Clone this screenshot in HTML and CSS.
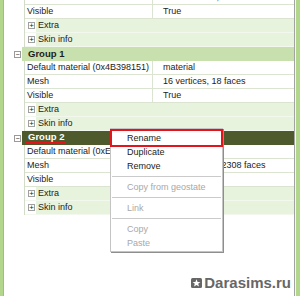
FILE: index.html
```html
<html lang="en">
<head>
	<meta charset="UTF-8">
	<title>Groups</title>
	<link rel="stylesheet" href="styles.css">
</head>
<body>
	<div class="frame">
		<div class="panel">
			<div class="tree">
				<div class="props">
					<div class="prop"><span class="name">Mesh</span><span class="value">1816 vertices, 2308 faces</span></div>
					<div class="prop"><span class="name">Visible</span><span class="value">True</span></div>
					<div class="sub"><span class="plus">+</span><span class="sub-label">Extra</span></div>
					<div class="sub"><span class="plus">+</span><span class="sub-label">Skin info</span></div>
				</div>

				<div class="group">
					<span class="toggle">−</span>
					<span class="group-label">Group 1</span>
				</div>
				<div class="props">
					<div class="prop"><span class="name">Default material (0x4B398151)</span><span class="value">material</span></div>
					<div class="prop"><span class="name">Mesh</span><span class="value">16 vertices, 18 faces</span></div>
					<div class="prop"><span class="name">Visible</span><span class="value">True</span></div>
					<div class="sub"><span class="plus">+</span><span class="sub-label">Extra</span></div>
					<div class="sub"><span class="plus">+</span><span class="sub-label">Skin info</span></div>
				</div>

				<div class="group selected">
					<span class="toggle">−</span>
					<span class="group-label"><span class="underline">Group 2</span></span>
				</div>
				<div class="props">
					<div class="prop"><span class="name">Default material (0xE6A20F17)</span><span class="value">material</span></div>
					<div class="prop"><span class="name">Mesh</span><span class="value">1816 vertices, 2308 faces</span></div>
					<div class="prop"><span class="name">Visible</span><span class="value">True</span></div>
					<div class="sub"><span class="plus">+</span><span class="sub-label">Extra</span></div>
					<div class="sub"><span class="plus">+</span><span class="sub-label">Skin info</span></div>
				</div>
			</div>
		</div>
	</div>

	<div class="menu">
		<div class="menu-item marked">Rename</div>
		<div class="menu-item">Duplicate</div>
		<div class="menu-item">Remove</div>
		<div class="menu-sep"></div>
		<div class="menu-item disabled">Copy from geostate</div>
		<div class="menu-sep"></div>
		<div class="menu-item disabled">Link</div>
		<div class="menu-sep"></div>
		<div class="menu-item disabled">Copy</div>
		<div class="menu-item disabled">Paste</div>
	</div>

	<div class="mark">
		<svg class="mark-icon" width="11" height="10" viewBox="0 0 11 10">
			<rect x="0" y="0" width="11" height="10" rx="1.5" fill="#666"/>
			<polygon points="5.5,1.3 6.6,4 9.4,4.1 7.2,5.8 8,8.6 5.5,7 3,8.6 3.8,5.8 1.6,4.1 4.4,4" fill="#fff"/>
		</svg>
		<span class="mark-text">Darasims.ru</span>
	</div>
</body>
</html>
```

FILE: styles.css
```css
*{
	box-sizing: border-box;
}
body{
	margin: 0;
	width: 300px;
	height: 296px;
	overflow: hidden;
	background: #b3d68d;
	font-family: "Liberation Sans", Arial, sans-serif;
	font-size: 9px;
	color: #1c1c1c;
	position: relative;
}
.frame{
	height: 296px;
	padding-left: 3px;
	padding-right: 5px;
}
.panel{
	height: 296px;
	background: #fff;
	border-left: 1px solid #a9b3a0;
	border-right: 1px solid #a3a3a3;
	box-shadow: 1px 0 0 #f4f9ee;
	overflow: hidden;
}
.tree{
	margin-top: -9px;
}

/* group header */
.group{
	display: flex;
	align-items: center;
	height: 14px;
}
.toggle{
	width: 7px;
	height: 7px;
	margin-left: 10px;
	margin-right: 1px;
	border: 1px solid #9a9a9a;
	background: #fff;
	font-size: 7px;
	line-height: 5px;
	text-align: center;
	color: #222;
}
.group-label{
	flex: 1;
	height: 14px;
	line-height: 14px;
	padding-left: 6px;
	background: #c8dfae;
	font-weight: bold;
	font-size: 9.5px;
}
.group.selected .group-label{
	background: #4f5a2c;
	color: #fff;
}
.underline{
	display: inline-block;
	line-height: 11px;
	margin-left: -3px;
	padding: 0 2px 0 3px;
	border-bottom: 2px solid #e3141c;
}

/* property rows */
.props{
	margin-left: 20px;
	border-left: 1px solid #d3dcc8;
}
.prop{
	display: grid;
	grid-template-columns: 128px 1fr;
	height: 14px;
	line-height: 13px;
	border-bottom: 1px solid #dbe4d0;
}
.name{
	padding-left: 2px;
	white-space: nowrap;
	overflow: hidden;
	border-right: 1px solid #dbe4d0;
}
.value{
	padding-left: 10px;
	white-space: nowrap;
}
.sub{
	display: flex;
	align-items: center;
	height: 14px;
	border-bottom: 1px solid #f3f8ee;
}
.plus{
	width: 7px;
	height: 7px;
	margin-left: 3px;
	margin-right: 1px;
	border: 1px solid #a0a0a0;
	font-size: 8px;
	line-height: 5px;
	text-align: center;
}
.sub-label{
	flex: 1;
	height: 13px;
	line-height: 13px;
	padding-left: 2px;
	background: #e8f3dd;
}

/* context menu */
.menu{
	position: absolute;
	left: 110px;
	top: 128px;
	width: 113px;
	padding: 2px 1px 1px;
	background: #fff;
	border: 1px solid #c4c4c4;
	box-shadow: 1px 1px 0 #8e8e8e;
}
.menu-item{
	height: 14px;
	line-height: 14px;
	padding-left: 15px;
	white-space: nowrap;
}
.menu-item.marked{
	outline: 2px solid #e3141c;
	outline-offset: 0;
}
.menu-item.disabled{
	color: #a8a8a8;
}
.menu-sep{
	height: 4px;
	margin-bottom: 3px;
	border-bottom: 1px solid #cacaca;
}

/* watermark */
.mark{
	position: absolute;
	right: 9px;
	bottom: 5px;
	display: flex;
	align-items: center;
	gap: 2px;
}
.mark-text{
	font-size: 15px;
	font-weight: bold;
	color: #676767;
}
```
